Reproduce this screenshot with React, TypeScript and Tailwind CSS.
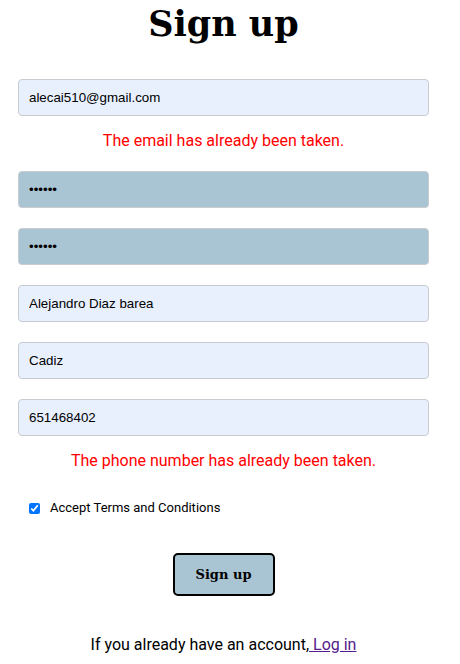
import React from 'react';

const inputBase =
  'block w-[411px] h-[37px] mx-auto rounded-[4px] border border-[#c8ccd0] px-[10px] text-[13.333px] text-black outline-none';

const slab = { fontFamily: '"DejaVu Serif", "Liberation Serif", serif' };
const arial = { fontFamily: '"Liberation Sans", Arial, sans-serif' };

const App: React.FC = () => {
  return (
    <div className="w-[447px] bg-white" style={{ fontFamily: 'Roboto, "Liberation Sans", sans-serif' }}>
      <h1 className="h-[48px] text-center text-[35px] leading-[47px] font-bold text-black" style={slab}>
        Sign up
      </h1>

      <form className="mt-[31px]">
        <input className={`${inputBase} bg-[#e8f0fe]`} style={arial} defaultValue="alecai510@gmail.com" />
        <p className="mt-[14px] mb-[19px] h-[22px] text-center text-[16px] leading-[22px] text-[#ff0000]">
          The email has already been taken.
        </p>

        <div className="flex flex-col gap-[20px]">
          <input type="password" className={`${inputBase} bg-[#a9c4d3]`} style={arial} defaultValue="123456" />
          <input type="password" className={`${inputBase} bg-[#a9c4d3]`} style={arial} defaultValue="123456" />
          <input className={`${inputBase} bg-[#e8f0fe]`} style={arial} defaultValue="Alejandro Diaz barea" />
          <input className={`${inputBase} bg-[#e8f0fe]`} style={arial} defaultValue="Cadiz" />
          <input className={`${inputBase} bg-[#e8f0fe]`} style={arial} defaultValue="651468402" />
        </div>

        <p className="mt-[14px] h-[22px] text-center text-[16px] leading-[22px] text-[#ff0000]">
          The phone number has already been taken.
        </p>

        <label className="mt-[28px] ml-[29px] flex items-center gap-[10px] text-[13px] leading-[16px] text-black">
          <input type="checkbox" defaultChecked className="m-0 h-[11px] w-[11px] accent-[#0075ff]" />
          Accept Terms and Conditions
        </label>

        <div className="mt-[37px] flex justify-center">
          <button
            type="button"
            className="h-[43px] w-[102px] rounded-[5px] border-2 border-black bg-[#a9c4d3] text-[13px] font-bold text-black"
            style={slab}
          >
            Sign up
          </button>
        </div>
      </form>

      <p className="mt-[38px] text-center text-[16px] leading-[22px] text-black">
        If you already have an account,
        <a href="#" className="text-[#551a8b] underline">
          {' '}Log in
        </a>
      </p>
    </div>
  );
};

export default App;
